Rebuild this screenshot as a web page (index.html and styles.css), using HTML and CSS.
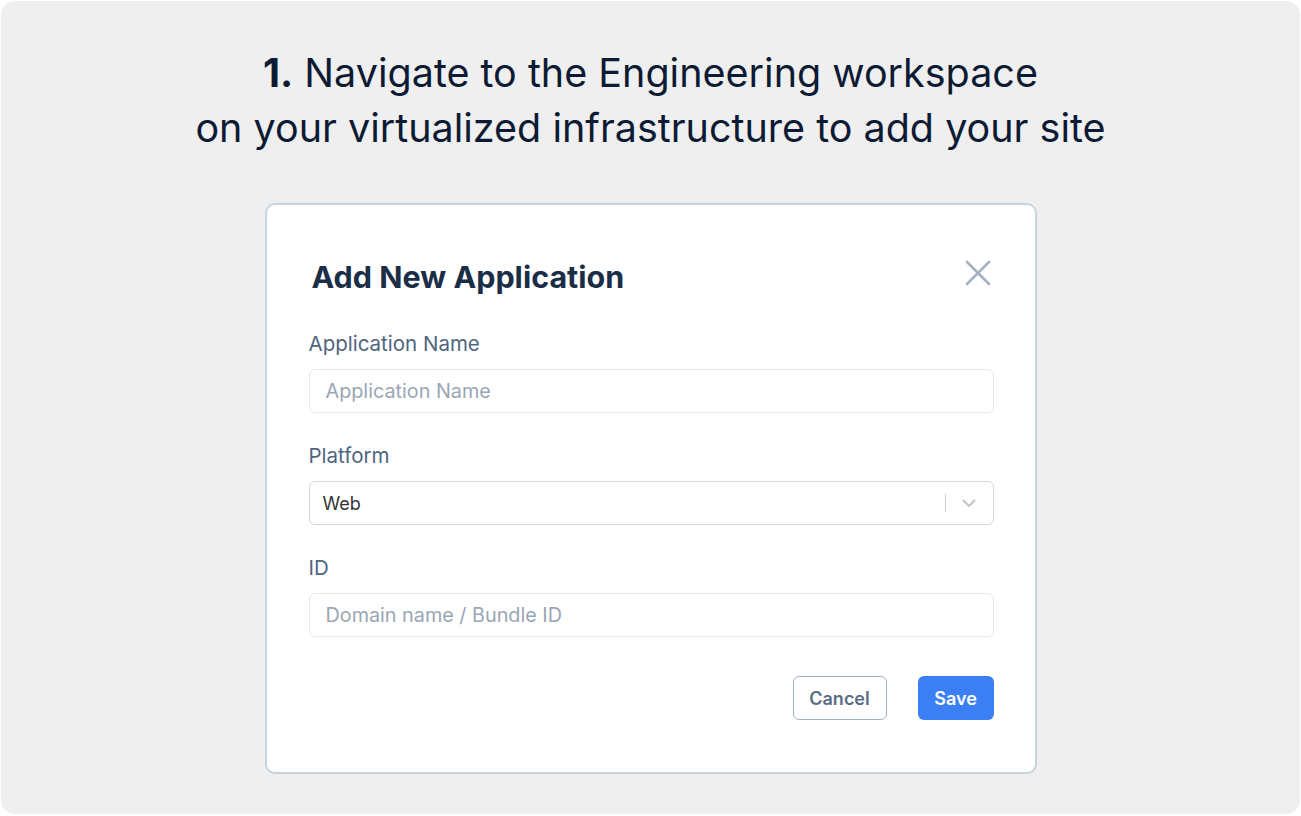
FILE: index.html
```html
<!DOCTYPE html>
<html>
<head>
<meta charset="utf-8">
<link rel="stylesheet" href="styles.css">
</head>
<body>
<div class="card">
  <h1 class="headline"><b>1.</b> Navigate to the Engineering workspace<br>on your virtualized infrastructure to add your site</h1>
  <div class="modal">
    <div class="modal-head">
      <h2 class="modal-title">Add New Application</h2>
      <svg class="close" width="26" height="26" viewBox="0 0 26 26"><path d="M2 2 L24 24 M24 2 L2 24" stroke="#a3b1c2" stroke-width="2.6" stroke-linecap="round"/></svg>
    </div>
    <div class="field">
      <label class="label">Application Name</label>
      <div class="input placeholder">Application Name</div>
    </div>
    <div class="field">
      <label class="label">Platform</label>
      <div class="input select">
        <span class="value">Web</span>
        <span class="sep"></span>
        <svg class="chev" width="14" height="9" viewBox="0 0 14 9"><path d="M1.5 1.5 L7 7 L12.5 1.5" fill="none" stroke="#c4c4c4" stroke-width="2" stroke-linecap="round" stroke-linejoin="round"/></svg>
      </div>
    </div>
    <div class="field">
      <label class="label">ID</label>
      <div class="input placeholder">Domain name / Bundle ID</div>
    </div>
    <div class="actions">
      <button class="btn cancel">Cancel</button>
      <button class="btn save">Save</button>
    </div>
  </div>
</div>
</body>
</html>
```
FILE: styles.css
```css
html, body {
  margin: 0;
  padding: 0;
  background: #ffffff;
}
body {
  font-family: Inter, "Liberation Sans", sans-serif;
}
.card {
  margin: 1px;
  height: 813px;
  box-sizing: border-box;
  background: #efefef;
  border-radius: 14px;
  display: flex;
  flex-direction: column;
  align-items: center;
  padding-top: 45px;
}
.headline {
  margin: 0;
  font-size: 39.5px;
  line-height: 55px;
  font-weight: 400;
  color: #0c1b33;
  text-align: center;
  letter-spacing: 0;
}
.headline b {
  font-weight: 700;
}
.modal {
  margin-top: 47px;
  width: 772px;
  box-sizing: border-box;
  background: #ffffff;
  border: 2px solid #c9d3de;
  border-radius: 10px;
  padding: 52px 41px 52px 42px;
}
.modal-head {
  display: flex;
  justify-content: space-between;
  align-items: flex-start;
  padding-left: 3px;
  margin-bottom: 35px;
}
.modal-title {
  margin: 0;
  font-size: 30.5px;
  line-height: 40px;
  font-weight: 700;
  color: #1a2e47;
}
.close {
  margin-top: 3px;
  margin-right: 3px;
}
.field {
  display: flex;
  flex-direction: column;
  gap: 13px;
  margin-bottom: 31px;
}
.label {
  font-size: 20.5px;
  line-height: 24px;
  color: #4f6580;
}
.input {
  height: 44px;
  box-sizing: border-box;
  border: 1px solid #e2e8f0;
  border-radius: 6px;
  display: flex;
  align-items: center;
  padding-left: 16px;
  font-size: 19.8px;
}
.placeholder {
  color: #9aa6b5;
}
.select {
  border-color: #d6d6d6;
  padding-left: 13px;
  padding-right: 17px;
  color: #333333;
  font-size: 18px;
}
.select .value {
  flex: 1;
}
.sep {
  width: 1px;
  height: 18px;
  background: #cccccc;
  margin-right: 16px;
}
.actions {
  display: flex;
  justify-content: flex-end;
  gap: 31px;
  margin-top: 39px;
}
.btn {
  height: 44px;
  box-sizing: border-box;
  border-radius: 6px;
  font-family: Inter, "Liberation Sans", sans-serif;
  font-size: 18px;
  font-weight: 600;
}
.cancel {
  width: 94px;
  background: #ffffff;
  border: 1.5px solid #a3b1c2;
  color: #5a6d84;
}
.save {
  width: 76px;
  background: #3b7ff5;
  border: none;
  color: #ffffff;
}
```
